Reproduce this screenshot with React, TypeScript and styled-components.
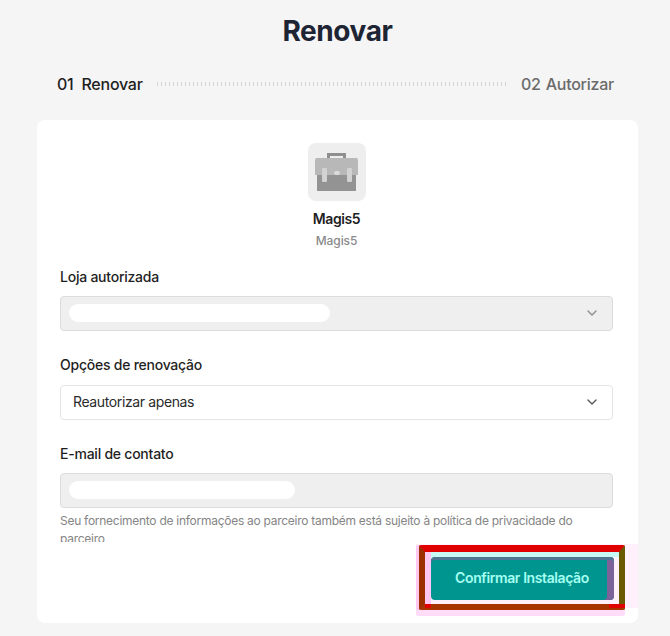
import { ChevronDown } from 'lucide-react';
import styled, { createGlobalStyle } from 'styled-components';

const GlobalStyle = createGlobalStyle`
  html, body {
    margin: 0;
    padding: 0;
    background: #f5f5f5;
    font-family: Inter, "Liberation Sans", sans-serif;
    overflow: hidden;
  }
`;

const Page = styled.div`
  width: 670px;
  height: 636px;
  box-sizing: border-box;
  padding: 14px 32px 13px 37px;
  display: flex;
  flex-direction: column;
`;

const Title = styled.h1`
  margin: 0;
  height: 34px;
  text-align: center;
  font-size: 28px;
  line-height: 34px;
  font-weight: 700;
  letter-spacing: -0.4px;
  color: #1d2433;
`;

const Stepper = styled.div`
  height: 72px;
  padding: 0 24px 0 20px;
  display: flex;
  align-items: center;
  gap: 14px;
`;

const Step = styled.div<{ $active?: boolean }>`
  display: flex;
  gap: ${(p) => (p.$active ? 8 : 5)}px;
  font-size: 16px;
  font-weight: 500;
  letter-spacing: -0.25px;
  white-space: nowrap;
  color: ${(p) => (p.$active ? '#1f1f1f' : '#6b6b6b')};
`;

const Dots = styled.div`
  flex: 1;
  height: 4px;
  background: repeating-linear-gradient(90deg, #d4d4d4 0 1px, transparent 1px 4px);
`;

const Card = styled.main`
  flex: 1;
  min-height: 0;
  background: #fff;
  border-radius: 8px;
  padding: 23px 25px 0 23px;
  display: flex;
  flex-direction: column;
`;

const Scroll = styled.div`
  height: 399px;
  overflow: hidden;
`;

const AppInfo = styled.div`
  display: flex;
  flex-direction: column;
  align-items: center;
`;

const AppIcon = styled.div`
  width: 58px;
  height: 58px;
  border-radius: 8px;
  background: #eeeeee;
  display: flex;
  align-items: center;
  justify-content: center;
`;

const AppName = styled.div`
  margin-top: 8px;
  font-size: 14px;
  line-height: 20px;
  font-weight: 600;
  letter-spacing: -0.4px;
  color: #1f1f1f;
`;

const AppVendor = styled.div`
  margin-top: 4px;
  font-size: 12px;
  line-height: 16px;
  font-weight: 500;
  letter-spacing: -0.1px;
  color: #8a8a8a;
`;

const Field = styled.div<{ $gap: number }>`
  margin-top: ${(p) => p.$gap}px;
`;

const Label = styled.div<{ $space?: number }>`
  font-size: 14px;
  line-height: 20px;
  font-weight: 500;
  letter-spacing: -0.24px;
  color: #1f1f1f;
  margin-bottom: ${(p) => p.$space ?? 10}px;
`;

const Control = styled.div<{ $disabled?: boolean }>`
  height: 35px;
  box-sizing: border-box;
  border-radius: 4px;
  border: 1px solid ${(p) => (p.$disabled ? '#dcdcdc' : '#e5e5e5')};
  background: ${(p) => (p.$disabled ? '#efefef' : '#fff')};
  padding: 0 12px 2px;
  display: flex;
  align-items: center;
  justify-content: space-between;
  font-size: 14px;
  letter-spacing: -0.38px;
  color: #2b2b2b;
`;

const Mask = styled.div<{ $width: number }>`
  width: ${(p) => p.$width}px;
  height: 18px;
  margin-left: -4px;
  border-radius: 9px;
  background: #fff;
`;

const Help = styled.p`
  margin: 4px 0 0;
  font-size: 12px;
  line-height: 18px;
  letter-spacing: -0.27px;
  color: #858585;
`;

const Footer = styled.div`
  flex: 1;
  display: flex;
  justify-content: flex-end;
  align-items: flex-start;
  padding-top: 15px;
  position: relative;
`;

const Button = styled.button`
  position: relative;
  width: 183px;
  height: 43px;
  margin-right: -1px;
  border: none;
  border-radius: 4px;
  background: #00968f;
  box-shadow: inset 0 3px 0 #4f7590, inset -7px 0 0 #7d6199;
  color: #a5fff2;
  font-family: inherit;
  font-size: 14px;
  font-weight: 600;
  letter-spacing: -0.4px;
  padding: 0 1px 2px 0;
`;

// markup drawn over the screenshot, not part of the form
const Halo = styled.div`
  position: absolute;
  left: 356px;
  top: 2px;
  width: 222px;
  height: 64px;
  background: #fff0fc;
`;

const Marker = styled.div`
  position: absolute;
  left: 359px;
  top: 3px;
  width: 206px;
  height: 65px;
  box-sizing: border-box;
  border-style: solid;
  border-width: 7px 6px 6px 6px;
  border-color: #e00000 #6b5a00 #a83400 #9c3000;
  border-radius: 2px;
  background: linear-gradient(#c8f8f4 0 5px, #fff0fc 5px) 6px 0 no-repeat, #ffc8f2;
  box-shadow: -3px 0 0 #ffc8f2, 0 6px 0 #ffdcf8, -3px 6px 0 #ffdcf8;

  &::before,
  &::after {
    content: '';
    position: absolute;
    bottom: -4px;
    height: 4px;
    background: #e00000;
  }
  &::before {
    left: 0;
    width: 6px;
  }
  &::after {
    right: -6px;
    width: 16px;
  }
`;

export default function App() {
  return (
    <>
      <GlobalStyle />
      <Page>
        <Title>Renovar</Title>
        <Stepper>
          <Step $active>
            <span>01</span>
            <span>Renovar</span>
          </Step>
          <Dots />
          <Step>
            <span>02</span>
            <span>Autorizar</span>
          </Step>
        </Stepper>
        <Card>
          <Scroll>
            <AppInfo>
              <AppIcon>
                <svg width="44" height="38" viewBox="0 0 44 38">
                  <path d="M12 5V0h19v5h-3V3H15v2z" fill="#8f8f8f" />
                  <path d="M1 5h41l1 2v15H0V7z" fill="#b8b8b8" />
                  <rect x="2" y="22" width="39" height="16" fill="#939393" />
                  <rect x="7" y="15" width="5" height="14" rx="1" fill="#d2d2d2" />
                  <rect x="32" y="15" width="5" height="14" rx="1" fill="#d2d2d2" />
                  <rect x="19" y="18" width="6" height="4" rx="2" fill="#dadada" />
                </svg>
              </AppIcon>
              <AppName>Magis5</AppName>
              <AppVendor>Magis5</AppVendor>
            </AppInfo>
            <Field $gap={18}>
              <Label $space={9}>Loja autorizada</Label>
              <Control $disabled>
                <Mask $width={261} />
                <ChevronDown size={16} color="#8c8c8c" />
              </Control>
            </Field>
            <Field $gap={24}>
              <Label>Opções de renovação</Label>
              <Control>
                <span>Reautorizar apenas</span>
                <ChevronDown size={16} color="#555" />
              </Control>
            </Field>
            <Field $gap={24}>
              <Label $space={9}>E-mail de contato</Label>
              <Control $disabled>
                <Mask $width={226} />
              </Control>
              <Help>
                Seu fornecimento de informações ao parceiro também está sujeito à política de
                privacidade do parceiro
              </Help>
            </Field>
          </Scroll>
          <Footer>
            <Halo />
            <Marker />
            <Button>Confirmar Instalação</Button>
          </Footer>
        </Card>
      </Page>
    </>
  );
}
